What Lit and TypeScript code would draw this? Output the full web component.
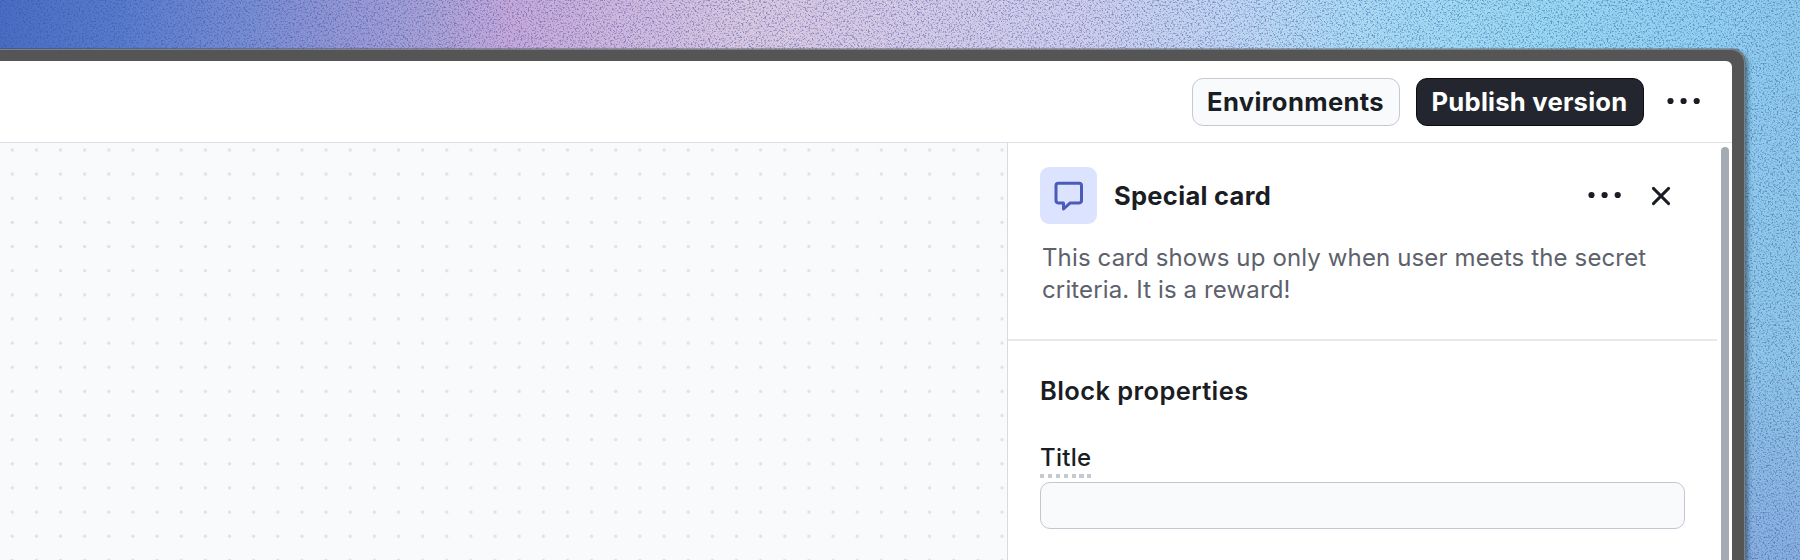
import { LitElement, html, css, svg } from "lit";
import { customElement } from "lit/decorators.js";

const dots = svg`<circle cx="3.5" cy="4" r="3.1"/><circle cx="16.6" cy="4" r="3.1"/><circle cx="29.7" cy="4" r="3.1"/>`;

@customElement("app-root")
export class AppRoot extends LitElement {
  static styles = css`
    :host {
      display: block;
      width: 1800px;
      height: 560px;
      overflow: hidden;
      font-family: Inter, sans-serif;
      color: #1a1d23;
    }
    * { box-sizing: border-box; }
    .desktop {
      position: relative;
      height: 560px;
      padding: 49px 55px 0 0;
      overflow: hidden;
      background:
        linear-gradient(to bottom, rgba(142, 196, 228, 0) 12%, rgba(142, 196, 228, 0.7) 65%, rgba(134, 170, 220, 0.85) 100%),
        linear-gradient(93deg, #4a6dc4 0, #577bcc 120px, #758cd2 240px, #9095d4 330px, #a9a1d6 430px, #c6a8d9 510px, #cfb6dd 620px, #d9c7e0 750px, #d5cae5 900px, #cecdeb 1080px, #bfd5f2 1230px, #a7dbf3 1370px, #96d8f2 1550px, #90d0f0 1700px, #8ccaec 1800px);
    }
    .grain {
      position: absolute;
      inset: 0;
      width: 1800px;
      height: 560px;
    }
    .window {
      position: relative;
      height: 540px;
      padding: 12px 13px 0 0;
      background: #555;
      border-radius: 0 13px 0 0;
      box-shadow: inset -1px 1px 0 #808080, 0 -1px 0 rgba(50, 55, 70, 0.3), 3px 3px 4px rgba(20, 50, 70, 0.55);
    }
    .screen {
      display: flex;
      flex-direction: column;
      height: 527px;
      background: #fff;
      border-radius: 0 6px 0 0;
      overflow: hidden;
    }
    .header {
      display: flex;
      flex: none;
      justify-content: flex-end;
      align-items: flex-start;
      height: 82px;
      padding: 16.5px 31px 0 0;
      border-bottom: 1px solid #dde0e7;
    }
    .button {
      height: 48.5px;
      border: 1.5px solid #c6c8d2;
      border-radius: 11px;
      background: #f9fafc;
      font-size: 25.6px;
      font-weight: 700;
      line-height: 46px;
      letter-spacing: 0.34px;
      text-align: center;
      white-space: nowrap;
    }
    .env { width: 208px; margin-right: 16px; padding-right: 1px; }
    .publish {
      width: 228px;
      margin-right: 23px;
      padding-right: 1px;
      letter-spacing: 0.24px;
      background: #23262f;
      border-color: #0c0d10;
      color: #fff;
    }
    .dots { display: block; width: 34px; height: 8px; fill: #1a1d23; }
    .header .dots { margin-top: 19px; }
    .body { display: flex; flex: 1; min-height: 0; }
    .canvas {
      width: 1007px;
      background-color: #f9fafc;
      background-image: radial-gradient(circle, #dfe1e4 1.2px, rgba(225, 227, 230, 0) 2.1px);
      background-size: 24.15px 24.15px;
      background-position: 0.2px -5.1px;
    }
    .panel { width: 710px; border-left: 1px solid #d8dbe3; }
    .intro { height: 198px; padding: 24px 30px 0 32px; border-bottom: 2px solid #e6e8ec; }
    .title-row { display: flex; align-items: center; height: 57px; }
    .tile {
      display: grid;
      place-items: center;
      width: 57px;
      height: 57px;
      border-radius: 9px;
      background: #dce3ff;
    }
    .tile svg { width: 30px; height: 30px; }
    .name { flex: 1; margin-left: 17px; font-size: 25.5px; font-weight: 700; line-height: 32px; letter-spacing: 0.3px; }
    .title-row .dots { margin: 0 29.5px 2px 0; }
    .close { display: block; width: 20px; height: 20px; margin-right: 16px; }
    .desc { margin: 17.6px 0 0 2px; color: #5c616b; font-size: 24px; line-height: 32.3px; letter-spacing: 0.13px; white-space: nowrap; }
    .props { padding: 34px 0 0 32px; }
    .props h2 { margin: 0; font-size: 25.5px; font-weight: 600; line-height: 32px; letter-spacing: 0.4px; }
    .label {
      display: block;
      width: 52px;
      height: 36px;
      margin-top: 31px;
      font-size: 24px;
      font-weight: 500;
      line-height: 40px;
      letter-spacing: 0.25px;
    }
    .underline {
      width: 52px;
      height: 4px;
      background: repeating-linear-gradient(to right, #c5cad1 0 4px, transparent 4px 7.9px);
    }
    .input {
      width: 645px;
      height: 47px;
      margin-top: 4px;
      border: 1.5px solid #c4c7d1;
      border-radius: 10px;
      background: #f9fafc;
    }
    .rail { width: 15px; padding: 4px 0 0 4px; }
    .thumb { width: 8px; height: 600px; border-radius: 4px; background: #a4abb5; }
  `;

  render() {
    return html`
      <div class="desktop">
        <svg class="grain" aria-hidden="true">
          <filter id="grain" x="0" y="0" width="100%" height="100%" color-interpolation-filters="sRGB">
            <feTurbulence type="fractalNoise" baseFrequency="0.57" numOctaves="3" seed="7"/>
            <feColorMatrix values="0 0 0 0 0.22  0 0 0 0 0.30  0 0 0 0 0.62  4 0 0 0 -1.98"/>
          </filter>
          <rect width="1800" height="560" filter="url(#grain)" opacity="0.5"/>
        </svg>
        <div class="window">
          <div class="screen">
            <div class="header">
              <div class="button env">Environments</div>
              <div class="button publish">Publish version</div>
              <svg class="dots" viewBox="0 0 34 8">${dots}</svg>
            </div>
            <div class="body">
              <div class="canvas"></div>
              <div class="panel">
                <div class="intro">
                  <div class="title-row">
                    <div class="tile">
                      <svg viewBox="0 0 30 30" fill="none" stroke="#4a5bb9" stroke-width="3" stroke-linejoin="round">
                        <path d="M4.3 2.3H25.2Q27.5 2.3 27.5 4.6V19.6Q27.5 21.9 25.2 21.9H16.2L9.5 28V21.9H4.3Q2 21.9 2 19.6V4.6Q2 2.3 4.3 2.3Z"/>
                      </svg>
                    </div>
                    <div class="name">Special card</div>
                    <svg class="dots" viewBox="0 0 34 8">${dots}</svg>
                    <svg class="close" viewBox="0 0 20 20" stroke="#1a1d23" stroke-width="2.9" stroke-linecap="round">
                      <path d="M2.4 2.4L17.6 17.6M17.6 2.4L2.4 17.6"/>
                    </svg>
                  </div>
                  <div class="desc">This card shows up only when user meets the secret<br>criteria. It is a reward!</div>
                </div>
                <div class="props">
                  <h2>Block properties</h2>
                  <span class="label">Title</span>
                  <div class="underline"></div>
                  <div class="input"></div>
                </div>
              </div>
              <div class="rail"><div class="thumb"></div></div>
            </div>
          </div>
        </div>
      </div>
    `;
  }
}
